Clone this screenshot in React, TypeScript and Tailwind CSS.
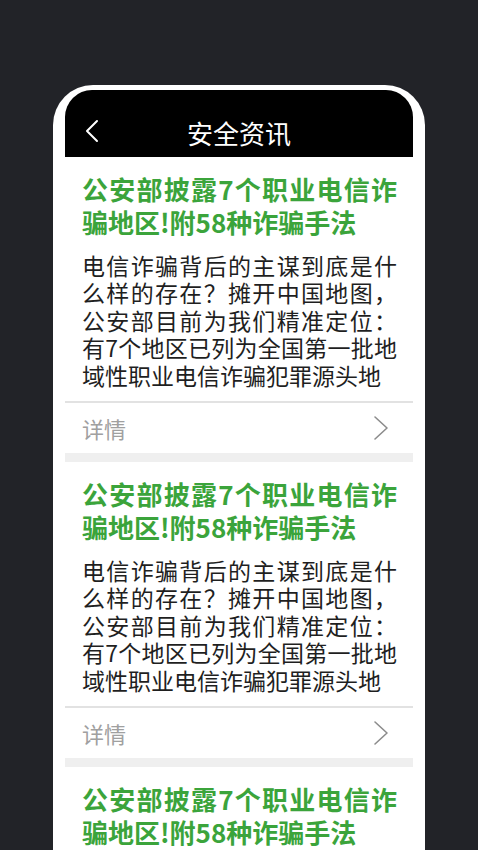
const FONT = { fontFamily: '"Noto Sans CJK SC", "Noto Sans", sans-serif' }

const TITLE_LINES = ['公安部披露7个职业电信诈', '骗地区!附58种诈骗手法']
const BODY_LINES = [
  '电信诈骗背后的主谋到底是什',
  '么样的存在？摊开中国地图，',
  '公安部目前为我们精准定位：',
  '有7个地区已列为全国第一批地',
  '域性职业电信诈骗犯罪源头地',
]

function ChevronLeft() {
  return (
    <svg width="14" height="24" viewBox="0 0 14 24" fill="none" className="-mt-[4px]">
      <path d="M12 2 L2 12 L12 22" stroke="white" strokeWidth="2" strokeLinecap="round" strokeLinejoin="round" />
    </svg>
  )
}

function ChevronRight() {
  return (
    <svg width="16" height="26" viewBox="0 0 16 26" fill="none">
      <path d="M2 2 L14 13 L2 24" stroke="#8c8c8c" strokeWidth="1.6" strokeLinecap="round" strokeLinejoin="round" />
    </svg>
  )
}

function NewsCard() {
  return (
    <div>
      <div className="px-[17px] pt-[15px]">
        <div className="w-[315px] text-[26px] leading-[33px] font-bold text-[#3ba43b]">
          {TITLE_LINES.map((line, i) => (
            <div
              key={i}
              className={i < TITLE_LINES.length - 1 ? 'text-justify [text-align-last:justify]' : ''}
            >
              {line}
            </div>
          ))}
        </div>
        <div className="mt-[14px] w-[315px] text-[23px] leading-[27.4px] text-[#1f1f1f]">
          {BODY_LINES.map((line, i) => (
            <div
              key={i}
              className={i < BODY_LINES.length - 1 ? 'text-justify [text-align-last:justify]' : ''}
            >
              {line}
            </div>
          ))}
        </div>
      </div>
      <div className="mt-[12px] h-[2px] bg-[#e2e2e2]" />
      <div className="flex h-[50px] items-center justify-between pl-[17px] pr-[24px]">
        <span className="text-[22px] text-[#a0a0a0]">详情</span>
        <ChevronRight />
      </div>
      <div className="h-[9px] bg-[#efefef]" />
    </div>
  )
}

export default function App() {
  return (
    <div className="h-[850px] overflow-hidden bg-[#222328] pl-[53px] pt-[85px]" style={FONT}>
      <div className="min-h-[900px] w-[372px] rounded-t-[40px] bg-white px-[12px] pt-[5px]">
        <div className="h-[67px] rounded-t-[27px] bg-black pt-[28px]">
          <div className="grid h-[30px] grid-cols-[1fr_auto_1fr] items-center">
            <div className="flex items-center pl-[20px]">
              <ChevronLeft />
            </div>
            <h1 className="text-[26px] leading-[30px] text-white">安全资讯</h1>
            <div />
          </div>
        </div>
        <NewsCard />
        <NewsCard />
        <NewsCard />
      </div>
    </div>
  )
}
